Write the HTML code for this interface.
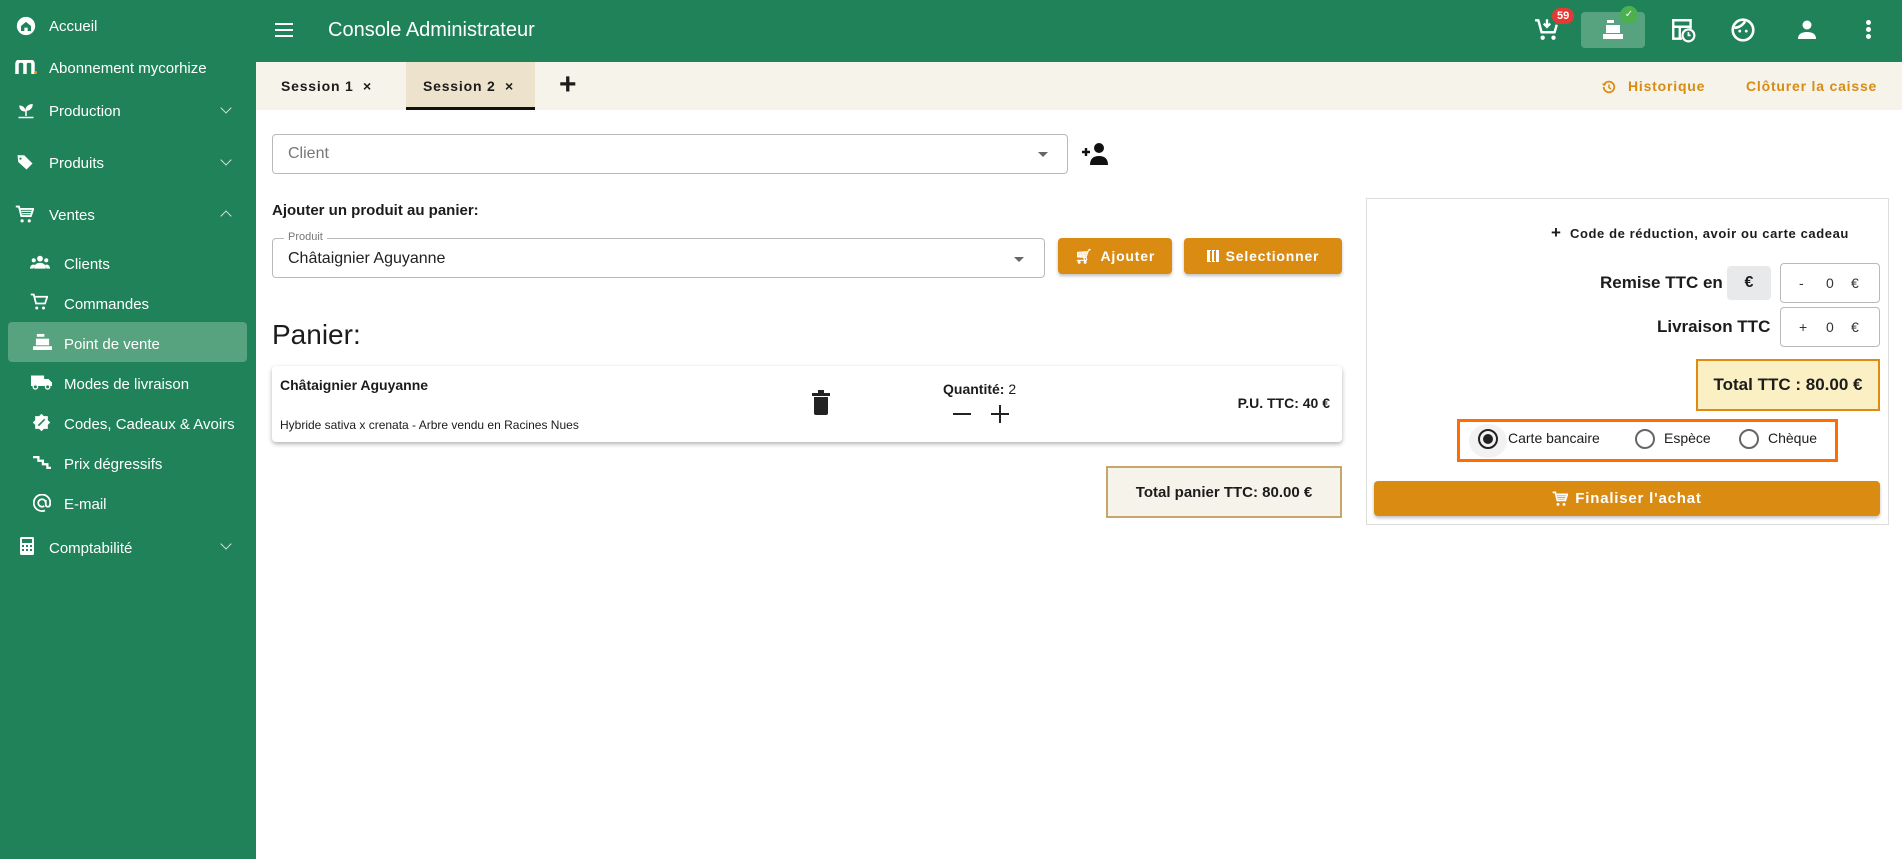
<!DOCTYPE html>
<html><head><meta charset="utf-8">
<style>
*{box-sizing:border-box;margin:0;padding:0}
body{width:1902px;height:859px;overflow:hidden;font-family:"Liberation Sans",sans-serif;background:#fff;position:relative;color:#1c1c1c}
.abs{position:absolute}
#side{left:0;top:0;width:256px;height:859px;background:#1f8259;color:#fff}
.si{position:absolute;left:0;font-size:15px;color:#fff;white-space:nowrap;margin-top:3px}
.si svg{position:absolute;top:-2px}
.chev{position:absolute;left:222px;width:8px;height:8px;border-right:1.6px solid #cfe3d9;border-bottom:1.6px solid #cfe3d9}
#top{left:256px;top:0;width:1646px;height:62px;background:#1f8259}
#tabs{left:256px;top:62px;width:1646px;height:48px;background:#f6f3eb}
.btn{position:absolute;background:#d98b12;color:#fff;border-radius:4px;font-weight:bold;font-size:14px;letter-spacing:.8px;box-shadow:0 2px 3px rgba(0,0,0,.25);display:flex;align-items:center;justify-content:center;gap:7px}
.field{position:absolute;border:1px solid #b9b9b9;border-radius:4px;background:#fff}
.tri{position:absolute;width:0;height:0;border-left:5px solid transparent;border-right:5px solid transparent;border-top:5px solid #666}
.radio{position:absolute;width:20px;height:20px;border:2px solid #666;border-radius:50%}
</style></head><body>

<div id="side" class="abs">
  <div class="si" style="top:15px;left:49px">Accueil</div>
  <svg class="abs" style="left:16px;top:16px" width="20" height="20" viewBox="0 0 24 24"><circle cx="12" cy="12" r="11" fill="#fff"/><path d="M6 12l6-5 6 5v6h-4v-4h-4v4H6z" fill="#1f8259"/></svg>
  <div class="si" style="top:57px;left:49px">Abonnement mycorhize</div>
  <svg class="abs" style="left:15px;top:60px" width="22" height="14" viewBox="0 0 22 14"><path d="M2 14V4q0-3 4-3t4 3v10M10 4q0-3 4-3t4 3v10" stroke="#fff" stroke-width="3.5" fill="none"/><circle cx="20.5" cy="12.5" r="1.5" fill="#e69b2a"/></svg>
  <div class="si" style="top:100px;left:49px">Production</div>
  <svg class="abs" style="left:17px;top:101px" width="18" height="18" viewBox="0 0 24 24"><path d="M2 21h20v2H2zM11 20v-6C6 14 3 11 3 6c5 0 8 3 8 7 0-5 4-9 10-9 0 6-4 9-8 9v7z" fill="#fff"/></svg>
  <div class="chev" style="top:104px;transform:rotate(45deg)"></div>
  <div class="si" style="top:152px;left:49px">Produits</div>
  <svg class="abs" style="left:16px;top:153px" width="18" height="18" viewBox="0 0 24 24"><path d="M2 3h9l11 11-8 8L3 12zM6 6a1.5 1.5 0 100 3 1.5 1.5 0 000-3z" fill="#fff"/></svg>
  <div class="chev" style="top:156px;transform:rotate(45deg)"></div>
  <div class="si" style="top:204px;left:49px">Ventes</div>
  <svg class="abs" style="left:15px;top:205px" width="19" height="19" viewBox="0 0 24 24"><path d="M1 2h4l3 12h12l3-9H7" stroke="#fff" stroke-width="2.4" fill="none"/><circle cx="9" cy="20" r="2" fill="#fff"/><circle cx="18" cy="20" r="2" fill="#fff"/><path d="M8 8h13M9 11h11" stroke="#fff" stroke-width="1.5"/></svg>
  <div class="chev" style="top:212px;transform:rotate(225deg)"></div>
  <div class="si" style="top:253px;left:64px">Clients</div>
  <svg class="abs" style="left:30px;top:254px" width="20" height="16" viewBox="0 0 24 18"><circle cx="12" cy="5" r="3.5" fill="#fff"/><circle cx="4.5" cy="7" r="2.5" fill="#fff"/><circle cx="19.5" cy="7" r="2.5" fill="#fff"/><path d="M5 17q0-7 7-7t7 7zM0 17q0-5 5-5l1 1-2 4zM24 17q0-5-5-5l-1 1 2 4z" fill="#fff"/></svg>
  <div class="si" style="top:293px;left:64px">Commandes</div>
  <svg class="abs" style="left:30px;top:293px" width="18" height="18" viewBox="0 0 24 24"><path d="M1 2h4l3 12h12l3-9H7" stroke="#fff" stroke-width="2.4" fill="none"/><circle cx="9" cy="20" r="2" fill="#fff"/><circle cx="18" cy="20" r="2" fill="#fff"/></svg>
  <div class="abs" style="left:8px;top:322px;width:239px;height:40px;background:#57a380;border-radius:4px"></div>
  <div class="si" style="top:333px;left:64px">Point de vente</div>
  <svg class="abs" style="left:33px;top:333px" width="19" height="17" viewBox="0 0 20 18"><rect x="4" y="1" width="8" height="3" fill="#fff"/><rect x="3" y="6" width="14" height="7" fill="#fff"/><rect x="0" y="14" width="20" height="4" fill="#fff"/></svg>
  <div class="si" style="top:373px;left:64px">Modes de livraison</div>
  <svg class="abs" style="left:31px;top:375px" width="21" height="15" viewBox="0 0 24 16"><path d="M0 0h15v12H0zM15 4h5l4 4v4h-9z" fill="#fff"/><circle cx="5" cy="13" r="2.5" fill="#1f8259" stroke="#fff" stroke-width="1.5"/><circle cx="19" cy="13" r="2.5" fill="#1f8259" stroke="#fff" stroke-width="1.5"/></svg>
  <div class="si" style="top:413px;left:64px">Codes, Cadeaux &amp; Avoirs</div>
  <svg class="abs" style="left:32px;top:413px" width="19" height="19" viewBox="0 0 24 24"><path d="M12 1l3 3h5v5l3 3-3 3v5h-5l-3 3-3-3H4v-5l-3-3 3-3V4h5z" fill="#fff"/><path d="M8 16l8-8" stroke="#1f8259" stroke-width="2"/></svg>
  <div class="si" style="top:453px;left:64px">Prix dégressifs</div>
  <svg class="abs" style="left:33px;top:455px" width="18" height="15" viewBox="0 0 20 16"><path d="M0 2h6v4h5v4h5v4h4" stroke="#fff" stroke-width="2.5" fill="none"/></svg>
  <div class="si" style="top:493px;left:64px">E-mail</div>
  <svg class="abs" style="left:33px;top:494px" width="18" height="18" viewBox="0 0 24 24"><path d="M17 12a5 5 0 10-2 4M17 8v6q0 3 3 3t3-5A11 11 0 1016 22" stroke="#fff" stroke-width="2.4" fill="none"/></svg>
  <div class="si" style="top:537px;left:49px">Comptabilité</div>
  <svg class="abs" style="left:20px;top:537px" width="14" height="18" viewBox="0 0 14 18"><rect width="14" height="18" rx="1.5" fill="#fff"/><rect x="2" y="2" width="10" height="4" fill="#1f8259"/><g fill="#1f8259"><rect x="2" y="8" width="2" height="2"/><rect x="6" y="8" width="2" height="2"/><rect x="10" y="8" width="2" height="2"/><rect x="2" y="12" width="2" height="2"/><rect x="6" y="12" width="2" height="2"/><rect x="10" y="12" width="2" height="2"/></g></svg>
  <div class="chev" style="top:540px;transform:rotate(45deg)"></div>
</div>

<div id="top" class="abs">
  <div class="abs" style="left:19px;top:23px;width:18px;height:2px;background:#fff;box-shadow:0 6px 0 #fff,0 12px 0 #fff"></div>
  <div class="abs" style="left:72px;top:19px;color:#fff;font-size:20px">Console Administrateur</div>
  <svg class="abs" style="left:1278px;top:16px" width="26" height="26" viewBox="0 0 24 24"><path d="M1 4h3l3 11h12l2-7" stroke="#fff" stroke-width="2.2" fill="none"/><circle cx="8" cy="20" r="2" fill="#fff"/><circle cx="18" cy="20" r="2" fill="#fff"/><path d="M12 3v6m-3-2l3 3 3-3" stroke="#fff" stroke-width="2.2" fill="none"/></svg>
  <div class="abs" style="left:1296px;top:8px;background:#e53935;color:#fff;font-size:11px;font-weight:bold;border-radius:9px;padding:2px 5px">59</div>
  <div class="abs" style="left:1325px;top:12px;width:64px;height:36px;background:#57a380;border-radius:4px"></div>
  <svg class="abs" style="left:1346px;top:19px" width="22" height="20" viewBox="0 0 22 20"><rect x="5" y="1" width="7" height="3" fill="#fff"/><rect x="4" y="6" width="14" height="8" fill="#fff"/><rect x="1" y="15" width="20" height="5" fill="#fff"/></svg>
  <div class="abs" style="left:1364px;top:6px;width:18px;height:18px;border-radius:50%;background:#4caf50;color:#fff;font-size:10px;text-align:center;line-height:18px">✓</div>
  <svg class="abs" style="left:1414px;top:17px" width="26" height="26" viewBox="0 0 24 24"><path d="M11 20H3V3h16v8M3 9h16M9 9v11" stroke="#fff" stroke-width="2.2" fill="none"/><circle cx="17" cy="17" r="5.5" stroke="#fff" stroke-width="2" fill="#1f8259"/><path d="M17 14v3h2" stroke="#fff" stroke-width="1.6" fill="none"/></svg>
  <svg class="abs" style="left:1474px;top:17px" width="26" height="26" viewBox="0 0 24 24"><circle cx="12" cy="12" r="9.5" stroke="#fff" stroke-width="2.4" fill="none"/><path d="M4 10q6 0 10-6" stroke="#fff" stroke-width="2.4" fill="none"/><circle cx="9" cy="13" r="1.3" fill="#fff"/><circle cx="15" cy="13" r="1.3" fill="#fff"/></svg>
  <svg class="abs" style="left:1539px;top:18px" width="24" height="24" viewBox="0 0 24 24"><circle cx="12" cy="7" r="4.5" fill="#fff"/><path d="M3 21q0-7 9-7t9 7z" fill="#fff"/></svg>
  <div class="abs" style="left:1610px;top:20px;width:5px;height:5px;border-radius:50%;background:#fff;box-shadow:0 7px 0 #fff,0 14px 0 #fff"></div>
</div>

<div id="tabs" class="abs">
  <div class="abs" style="left:25px;top:16px;font-size:14px;font-weight:bold;letter-spacing:.8px">Session 1 &nbsp;×</div>
  <div class="abs" style="left:150px;top:0;width:129px;height:48px;background:#ede3cc;border-bottom:3px solid #111"></div>
  <div class="abs" style="left:167px;top:16px;font-size:14px;font-weight:bold;letter-spacing:.8px">Session 2 &nbsp;×</div>
  <div class="abs" style="left:303px;top:6px;font-size:30px;font-weight:bold">+</div>
  <svg class="abs" style="left:1345px;top:17px" width="16" height="16" viewBox="0 0 24 24"><path d="M4 12a8 8 0 108-8 8 8 0 00-7 4" stroke="#d98b12" stroke-width="2.6" fill="none"/><path d="M1 7l4 4 3-4z" fill="#d98b12"/><path d="M12 8v5l3 2" stroke="#d98b12" stroke-width="2.2" fill="none"/></svg>
  <div class="abs" style="left:1372px;top:16px;font-size:14px;color:#d98b12;font-weight:bold;letter-spacing:.8px">Historique</div>
  <div class="abs" style="left:1490px;top:16px;font-size:14px;color:#d98b12;font-weight:bold;letter-spacing:.8px">Clôturer la caisse</div>
</div>

<div class="field" style="left:272px;top:134px;width:796px;height:40px"></div>
<div class="abs" style="left:288px;top:145px;font-size:16px;color:#777">Client</div>
<div class="tri" style="left:1038px;top:152px"></div>
<svg class="abs" style="left:1082px;top:142px" width="28" height="24" viewBox="0 0 28 24"><path d="M0 10h8M4 6v8" stroke="#111" stroke-width="2.4"/><circle cx="17" cy="6" r="5" fill="#111"/><path d="M8 23q0-9 9-9t9 9z" fill="#111"/></svg>

<div class="abs" style="left:272px;top:202px;font-size:15px;font-weight:bold">Ajouter un produit au panier:</div>
<div class="field" style="left:272px;top:238px;width:773px;height:40px"></div>
<div class="abs" style="left:284px;top:231px;background:#fff;padding:0 4px;font-size:11px;color:#777">Produit</div>
<div class="abs" style="left:288px;top:250px;font-size:16px;color:#222">Châtaignier Aguyanne</div>
<div class="tri" style="left:1014px;top:257px"></div>
<div class="btn" style="left:1058px;top:238px;width:114px;height:36px"><span style="font-size:14px">🛒︎</span>Ajouter</div>
<div class="btn" style="left:1184px;top:238px;width:158px;height:36px"><span style="display:inline-block;width:12px;height:12px;border:1px dotted #fff;background:repeating-linear-gradient(90deg,#fff 0 2px,transparent 2px 4px)"></span>Selectionner</div>

<div class="abs" style="left:272px;top:319px;font-size:28px">Panier:</div>

<div class="abs" style="left:272px;top:366px;width:1070px;height:76px;background:#fff;border-radius:4px;box-shadow:0 2px 5px rgba(0,0,0,.3)"></div>
<div class="abs" style="left:280px;top:377px;font-size:14px;font-weight:bold">Châtaignier Aguyanne</div>
<div class="abs" style="left:280px;top:418px;font-size:12px">Hybride sativa x crenata - Arbre vendu en Racines Nues</div>
<svg class="abs" style="left:812px;top:390px" width="18" height="25" viewBox="0 0 18 25"><rect x="6" y="0" width="6" height="3" fill="#222"/><rect x="0" y="3" width="18" height="3" fill="#222"/><path d="M2 7h14v16q0 2-2 2H4q-2 0-2-2z" fill="#222"/></svg>
<div class="abs" style="left:943px;top:381px;font-size:14px"><b>Quantité:</b> 2</div>
<div class="abs" style="left:953px;top:413px;width:18px;height:2.4px;background:#222"></div>
<div class="abs" style="left:991px;top:413px;width:18px;height:2.4px;background:#222"></div>
<div class="abs" style="left:998.8px;top:405px;width:2.4px;height:18px;background:#222"></div>
<div class="abs" style="left:1231px;top:395px;width:119px;font-size:14px;font-weight:bold;white-space:nowrap;text-align:right;padding-right:20px">P.U. TTC: 40 €</div>

<div class="abs" style="left:1106px;top:466px;width:236px;height:52px;background:#f6f3eb;border:2px solid #c7a66b;display:flex;align-items:center;justify-content:center;font-size:15px;font-weight:bold">Total panier TTC: 80.00 €</div>

<div class="abs" style="left:1366px;top:198px;width:523px;height:327px;border:1px solid #ddd;background:#fff"></div>
<div class="abs" style="left:1551px;top:223px;font-size:13px;font-weight:bold;letter-spacing:.6px"><span style="font-size:17px">+</span>&nbsp;&nbsp;Code de réduction, avoir ou carte cadeau</div>
<div class="abs" style="left:1600px;top:273px;font-size:17px;font-weight:bold">Remise TTC en</div>
<div class="abs" style="left:1727px;top:266px;width:44px;height:34px;background:#e8e9eb;border-radius:4px;text-align:center;line-height:34px;font-weight:bold;font-size:16px">€</div>
<div class="field" style="left:1780px;top:263px;width:100px;height:40px;font-size:14px;color:#333"><span class="abs" style="left:18px;top:11px">-</span><span class="abs" style="left:45px;top:11px">0</span><span class="abs" style="left:70px;top:11px">€</span></div>
<div class="abs" style="left:1657px;top:317px;font-size:17px;font-weight:bold">Livraison TTC</div>
<div class="field" style="left:1780px;top:307px;width:100px;height:40px;font-size:14px;color:#333"><span class="abs" style="left:18px;top:11px">+</span><span class="abs" style="left:45px;top:11px">0</span><span class="abs" style="left:70px;top:11px">€</span></div>
<div class="abs" style="left:1696px;top:359px;width:184px;height:52px;background:#fbefc4;border:2px solid #e08a12;display:flex;align-items:center;justify-content:center;font-size:17px;font-weight:bold">Total TTC : 80.00 €</div>
<div class="abs" style="left:1457px;top:419px;width:381px;height:43px;border:3px solid #ff6d00"></div>
<div class="abs" style="left:1469px;top:424px;width:38px;height:34px;border-radius:50%;background:#f2f2f2"></div>
<div class="radio" style="left:1478px;top:429px;border-color:#222"><div style="margin:3px;width:10px;height:10px;border-radius:50%;background:#222"></div></div>
<div class="abs" style="left:1508px;top:430px;font-size:14px">Carte bancaire</div>
<div class="radio" style="left:1635px;top:429px"></div>
<div class="abs" style="left:1664px;top:430px;font-size:14px">Espèce</div>
<div class="radio" style="left:1739px;top:429px"></div>
<div class="abs" style="left:1768px;top:430px;font-size:14px">Chèque</div>
<div class="btn" style="left:1374px;top:481px;width:506px;height:35px;font-size:15px"><svg width="16" height="16" viewBox="0 0 24 24"><path d="M1 2h4l3 12h12l3-9H7" stroke="#fff" stroke-width="2.6" fill="none"/><circle cx="9" cy="20" r="2.2" fill="#fff"/><circle cx="18" cy="20" r="2.2" fill="#fff"/><path d="M8 8h13M9 11h11" stroke="#fff" stroke-width="1.6"/></svg>Finaliser l'achat</div>

</body></html>
